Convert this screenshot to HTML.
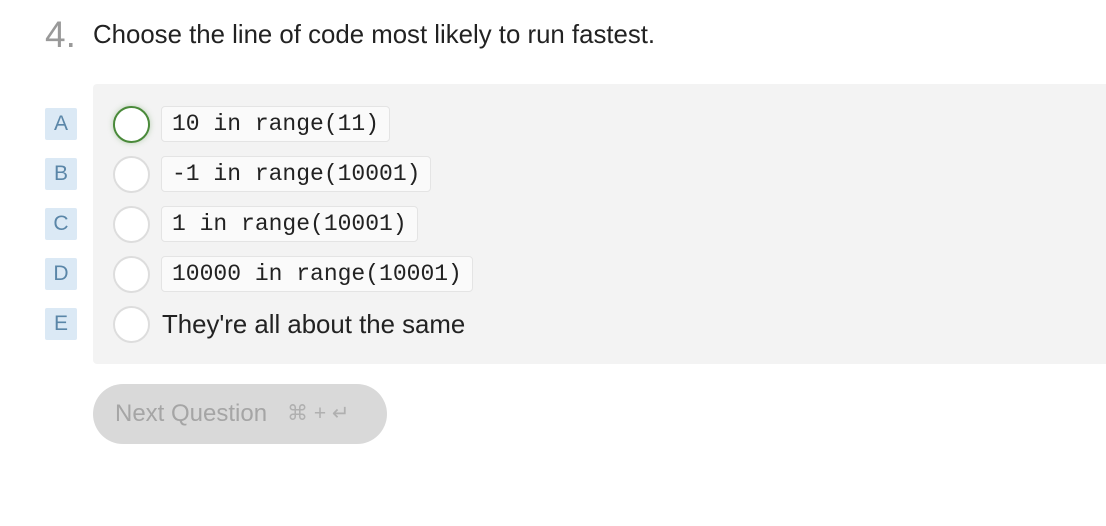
<!DOCTYPE html>
<html><head><meta charset="utf-8"><style>
body{margin:0;width:1106px;height:526px;background:#fff;font-family:"Liberation Sans",sans-serif;position:relative;overflow:hidden}
.num{position:absolute;left:45px;top:14px;font-size:37px;color:#999}
.q{position:absolute;left:93px;top:21px;font-size:25.8px;color:#222}
.box{position:absolute;left:93px;top:84px;width:1013px;height:280px;background:#f3f3f3;border-radius:4px 0 0 4px}
.badge{position:absolute;left:45px;width:32px;height:32px;background:#dbe9f5;color:#5a86a8;font-size:21px;text-align:center;line-height:32px;border-radius:2px}
.radio{position:absolute;left:113px;width:33px;height:33px;border:2px solid #ddd;border-radius:50%;background:#fff}
.radio.sel{border-color:#4a8a3a;box-shadow:0 0 6px rgba(74,138,58,.35)}
.code{position:absolute;left:161px;height:34px;padding:0 10px;background:#fafafa;border:1px solid #e4e4e4;border-radius:4px;font-family:"Liberation Mono",monospace;font-size:23px;line-height:35px;color:#222}
.txt{position:absolute;left:162px;top:0;font-size:25.8px;color:#222}
.btn{position:absolute;left:93px;top:384px;width:294px;height:60px;border-radius:30px;background:#d9d9d9;color:#a5a5a5}
.btn .l{position:absolute;left:22px;top:16px;font-size:24px}
.btn .k{position:absolute;left:194px;top:17px;font-size:21px;color:#b0b0b0}
</style></head><body>
<div class="num">4.</div>
<div class="q">Choose the line of code most likely to run fastest.</div>
<div class="box"></div>
<div class="badge" style="top:108px">A</div>
<div class="badge" style="top:158px">B</div>
<div class="badge" style="top:208px">C</div>
<div class="badge" style="top:258px">D</div>
<div class="badge" style="top:308px">E</div>
<div class="radio sel" style="top:106px"></div>
<div class="radio" style="top:156px"></div>
<div class="radio" style="top:206px"></div>
<div class="radio" style="top:256px"></div>
<div class="radio" style="top:306px"></div>
<div class="code" style="top:106px">10 in range(11)</div>
<div class="code" style="top:156px">-1 in range(10001)</div>
<div class="code" style="top:206px">1 in range(10001)</div>
<div class="code" style="top:256px">10000 in range(10001)</div>
<div class="txt" style="top:311px">They're all about the same</div>
<div class="btn"><span class="l">Next Question</span><span class="k">⌘ + ↵</span></div>
</body></html>
